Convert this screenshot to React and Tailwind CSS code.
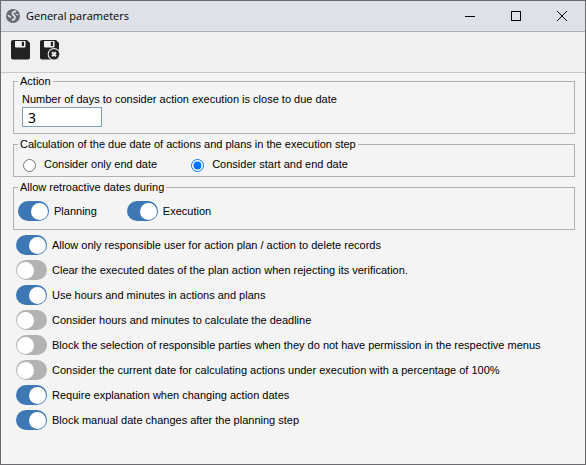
import { useState } from 'react'

const OPTIONS = [
  { id: 'delete-records', label: 'Allow only responsible user for action plan / action to delete records', on: true },
  { id: 'clear-dates', label: 'Clear the executed dates of the plan action when rejecting its verification.', on: false },
  { id: 'use-hours', label: 'Use hours and minutes in actions and plans', on: true },
  { id: 'hours-deadline', label: 'Consider hours and minutes to calculate the deadline', on: false },
  { id: 'block-selection', label: 'Block the selection of responsible parties when they do not have permission in the respective menus', on: false },
  { id: 'current-date', label: 'Consider the current date for calculating actions under execution with a percentage of 100%', on: false },
  { id: 'explanation', label: 'Require explanation when changing action dates', on: true },
  { id: 'manual-changes', label: 'Block manual date changes after the planning step', on: true },
]

function Toggle({ label, defaultChecked }) {
  return (
    <label className="flex items-center gap-[5px]">
      <input
        type="checkbox"
        role="switch"
        defaultChecked={defaultChecked}
        className="flex h-5 w-[31px] shrink-0 appearance-none items-center rounded-full bg-[#b3b3b3] px-px before:block before:size-[17px] before:rounded-full before:bg-white checked:bg-[#3d78b4] checked:before:ml-3"
      />
      {label}
    </label>
  )
}

function Group({ title, children, className }) {
  return (
    <fieldset className={`min-w-0 border border-[#b0b0b0] px-1 ${className}`}>
      <legend className="px-[2px] leading-[15px]">{title}</legend>
      {children}
    </fieldset>
  )
}

function Logo() {
  return (
    <svg viewBox="0 0 14 14" className="size-[14px]" aria-hidden="true">
      <circle cx="7" cy="7" r="7" fill="#666a6e" />
      <path
        d="M10.2 2.6C7.8 2.2 6.2 3.2 6.4 4.6C6.7 6.2 9.4 6.6 9 8.8C8.7 10.3 7.4 11 6 11.4"
        fill="none"
        stroke="#dee1e7"
        strokeWidth="1.8"
      />
      <path d="M1.4 5.8C3.2 6 4.6 7 5.6 8.4C4 9.2 2 8.2 1.4 5.8Z" fill="#dee1e7" />
      <path d="M9 4.8C10.4 5.2 11.4 5 12.6 5.2C12 6.6 10.4 6.6 9 4.8Z" fill="#dee1e7" />
    </svg>
  )
}

function SaveIcon({ closing }) {
  return (
    <svg viewBox="0 0 21 21" className="size-[21px]" aria-hidden="true">
      <path d="M3 0H17L20 3V17.5Q20 19.5 18 19.5H3Q1 19.5 1 17.5V2Q1 0 3 0Z" fill="#222" />
      <path d="M5 1H15.5V6.5Q15.5 7.5 14.5 7.5H6Q5 7.5 5 6.5Z" fill="#f0f0f0" />
      <path d="M11.8 1.8H14V6H11.8Z" fill="#222" />
      {closing && (
        <>
          <circle cx="15" cy="14.3" r="6.3" fill="#f0f0f0" />
          <circle cx="15" cy="14.3" r="5.3" fill="#222" />
          <path d="M13 12.3L17 16.3M17 12.3L13 16.3" stroke="#f0f0f0" strokeWidth="2" />
        </>
      )}
    </svg>
  )
}

function TitleBar() {
  return (
    <header className="flex h-[31px] items-center border-b border-[#abafb5] bg-[#dee1e7] pl-[5px]">
      <Logo />
      <h1 className="ml-1.5 flex-1 font-['Open_Sans','Noto_Sans',sans-serif] text-[11px] leading-4">
        General parameters
      </h1>
      <button type="button" aria-label="Minimize" className="flex h-full w-[46px] items-center justify-center">
        <svg viewBox="0 0 10 10" className="size-[10px]" shapeRendering="crispEdges">
          <path d="M0 5.5H10" stroke="#000" />
        </svg>
      </button>
      <button type="button" aria-label="Maximize" className="flex h-full w-[46px] items-center justify-center">
        <svg viewBox="0 0 10 10" className="size-[10px]" shapeRendering="crispEdges">
          <path d="M0.5 0.5H9.5V9.5H0.5Z" fill="none" stroke="#000" />
        </svg>
      </button>
      <button type="button" aria-label="Close" className="flex h-full w-[46px] items-center justify-center">
        <svg viewBox="0 0 10 10" className="size-[10px]">
          <path d="M0 0L10 10M10 0L0 10" stroke="#000" />
        </svg>
      </button>
    </header>
  )
}

export default function App() {
  const [days, setDays] = useState('3')

  return (
    <div className="flex min-h-screen flex-col border border-[#6b6b6d] bg-[#f4f4f4] font-['Liberation_Sans',Arial,sans-serif] text-[11px] leading-4 text-black">
      <TitleBar />
      <div className="flex h-[41px] items-start gap-2 border-b border-[#c8c8c8] bg-[#f0f0f0] px-[9px] pt-2">
        <button type="button" aria-label="Save">
          <SaveIcon />
        </button>
        <button type="button" aria-label="Save and exit">
          <SaveIcon closing />
        </button>
      </div>

      <main className="flex flex-col pt-px pr-[10px] pl-3">
        <div className="flex flex-col gap-[3px]">
          <Group title="Action" className="pt-[2px] pb-[6px]">
            <div className="flex flex-col items-start pl-1">
              <label htmlFor="days">Number of days to consider action execution is close to due date</label>
              <input
                id="days"
                value={days}
                onChange={(e) => setDays(e.target.value)}
                className="h-5 w-20 border border-[#7b9ebd] bg-white px-[5px] font-['Noto_Sans',sans-serif] text-[14px]"
              />
            </div>
          </Group>

          <Group title="Calculation of the due date of actions and plans in the execution step" className="pt-1 pb-1">
            <div className="flex items-center gap-[34px] pl-[5px]">
              <label className="flex items-start gap-2">
                <input type="radio" name="calculation" className="mt-[3px] size-[13px]" />
                Consider only end date
              </label>
              <label className="flex items-start gap-2">
                <input type="radio" name="calculation" defaultChecked className="mt-[3px] size-[13px]" />
                Consider start and end date
              </label>
            </div>
          </Group>

          <Group title="Allow retroactive dates during" className="pt-[6px] pb-2">
            <div className="flex gap-[30px]">
              <Toggle label="Planning" defaultChecked />
              <Toggle label="Execution" defaultChecked />
            </div>
          </Group>
        </div>

        <div className="mt-[5px] flex flex-col items-start gap-[5px] pl-[3px]">
          {OPTIONS.map((option) => (
            <Toggle key={option.id} label={option.label} defaultChecked={option.on} />
          ))}
        </div>
      </main>
    </div>
  )
}
